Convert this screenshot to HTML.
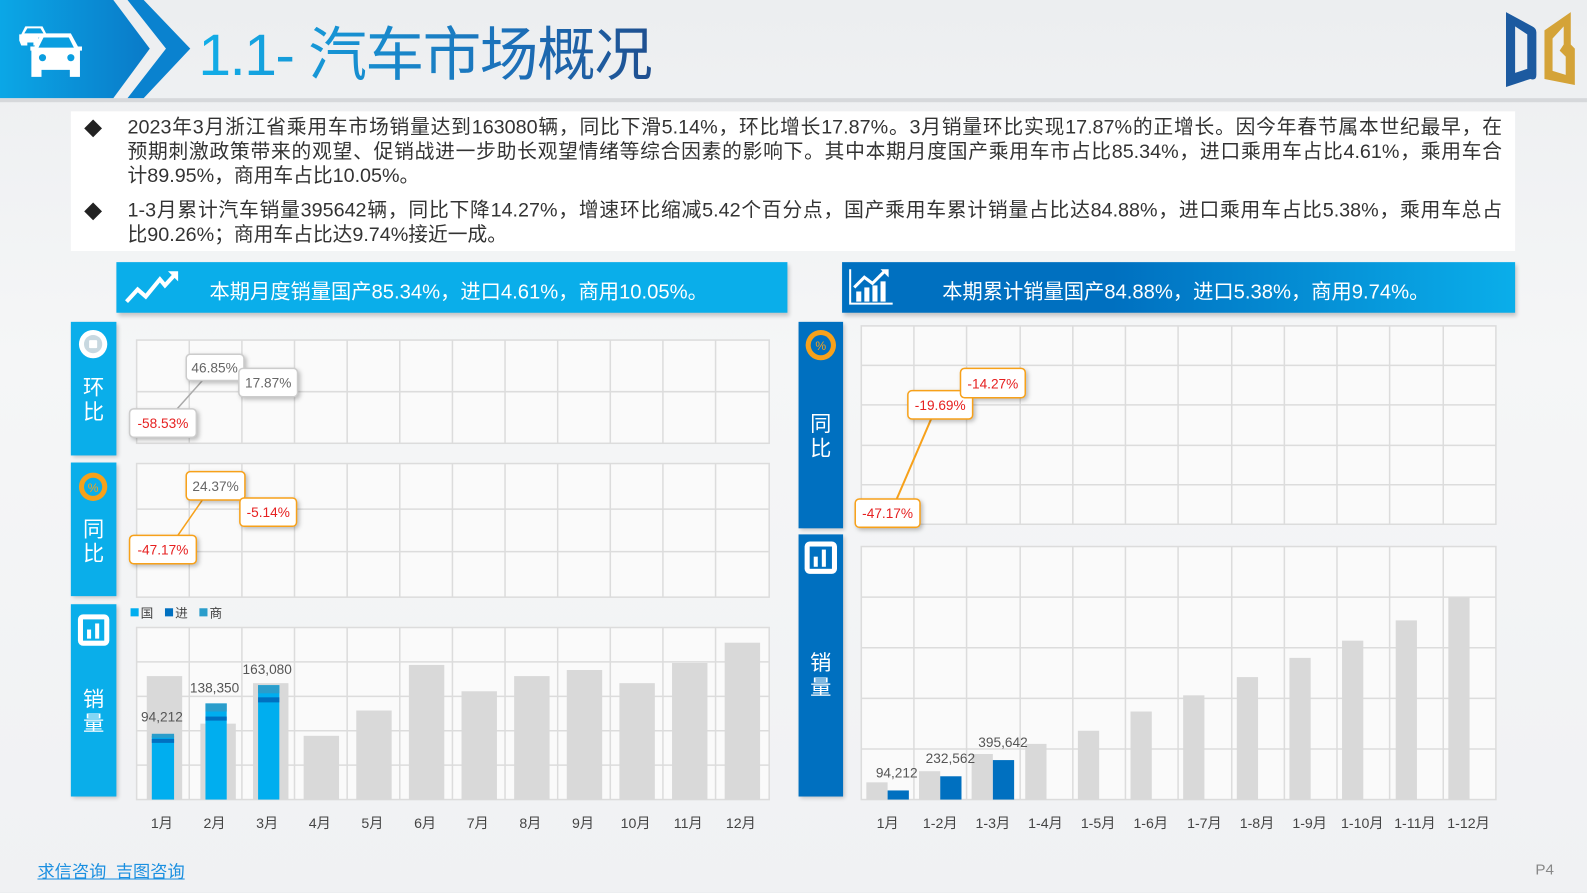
<!DOCTYPE html>
<html><head><meta charset="utf-8"><style>
*{margin:0;padding:0;box-sizing:border-box}
body{width:1587px;height:892px;overflow:hidden;position:relative;background:linear-gradient(180deg,#eceef0 0%,#f5f6f7 40%,#f0f1f3 100%);font-family:"Liberation Sans","Noto Sans CJK SC",sans-serif}
#w{position:absolute;left:0;top:0;width:1568px;height:882px;transform:scale(1.0121);transform-origin:0 0}
.abs{position:absolute}
.ln{position:absolute;left:126px;width:1358px;font-size:19.5px;line-height:24px;color:#333;white-space:nowrap;text-align:justify;text-align-last:justify}
.ln.l{text-align-last:left}
.side{position:absolute;color:#fff;font-size:21px;text-align:center;line-height:24px}
</style></head><body><div id="w">
<div class="abs" style="left:0;top:97px;width:1568px;height:4px;background:#d6d8db"></div>
<svg class="abs" style="left:0;top:0" width="200" height="98">
<defs><linearGradient id="hg" x1="0" y1="0" x2="1" y2="0"><stop offset="0" stop-color="#0ba7e6"/><stop offset="1" stop-color="#0a7ac8"/></linearGradient></defs>
<polygon points="0,0 112,0 148,48 112,97 0,97" fill="url(#hg)"/>
<polygon points="126,0 142,0 188,48 142,97 126,97 164,48" fill="#0a82cf"/>
<g fill="#fff">
<path d="M19,40 v-6 h2 l4,-8 h17 l4,8 h2 v3 h-5 l-5,0 v8 h-5 v-3 h-6 v3 h-6z"/>
<path d="M30,50 v-4 h4 l7,-13 h29 l7,13 h4 v4 h-2 v26 h-10 v-7 h-28 v7 h-10 v-26z"/>
</g>
<g fill="#0a9ee0"><path d="M24,33 l3,-5 h13 l3,5z"/><path d="M43,37 h25 l5,10 h-35z"/><circle cx="42" cy="57" r="3.5"/><circle cx="70" cy="57" r="3.5"/></g>
</svg>
<div class="abs" style="left:196px;top:15px;font-size:58px;line-height:80px;background:linear-gradient(90deg,#12aee8,#1c6fb8 70%,#1f4f8f);-webkit-background-clip:text;color:transparent;letter-spacing:-1.5px">1.1- 汽车市场概况</div>
<svg class="abs" style="left:1484px;top:8px" width="80" height="80">
<path d="M4,4 L30,18 Q34,20 34,24 V66 Q34,72 28,70 L4,78Z M13,18 V64 L25,60 V26Z" fill="#1c5aa0" fill-rule="evenodd"/>
<path d="M42,22 L68,4 V36 L72,40 V76 L42,70Z M50,30 V62 L63,66 V48 L57,42 L61,36 V18Z" fill="#d4a338" fill-rule="evenodd"/>
</svg>
<div class="abs" style="left:70px;top:110px;width:1427px;height:138px;background:#fff"></div>
<div class="abs" style="left:83px;top:114px;font-size:18px;color:#222">◆</div>
<div class="abs" style="left:83px;top:196px;font-size:18px;color:#222">◆</div>
<div class="ln" style="top:114px">2023年3月浙江省乘用车市场销量达到163080辆，同比下滑5.14%，环比增长17.87%。3月销量环比实现17.87%的正增长。因今年春节属本世纪最早，在</div>
<div class="ln" style="top:138px">预期刺激政策带来的观望、促销战进一步助长观望情绪等综合因素的影响下。其中本期月度国产乘用车市占比85.34%，进口乘用车占比4.61%，乘用车合</div>
<div class="ln l" style="top:162px">计89.95%，商用车占比10.05%。</div>
<div class="ln" style="top:196px">1-3月累计汽车销量395642辆，同比下降14.27%，增速环比缩减5.42个百分点，国产乘用车累计销量占比达84.88%，进口乘用车占比5.38%，乘用车总占</div>
<div class="ln l" style="top:220px">比90.26%；商用车占比达9.74%接近一成。</div>

<div class="abs" style="left:115px;top:259px;width:663px;height:50px;background:#0aaeea;box-shadow:2px 3px 4px rgba(0,0,0,.2)"></div>
<svg class="abs" style="left:122px;top:266px" width="56" height="36"><polyline points="3,32 14,20 22,27 36,10 41,16 52,4" fill="none" stroke="#fff" stroke-width="4"/><polygon points="44,2 54,2 54,12" fill="#fff"/></svg>
<div class="abs" style="left:207px;top:272px;font-size:20px;color:#fff">本期月度销量国产85.34%，进口4.61%，商用10.05%。</div>
<div class="abs" style="left:832px;top:259px;width:665px;height:50px;background:linear-gradient(90deg,#0070c0 40%,#0aaeea);box-shadow:2px 3px 4px rgba(0,0,0,.2)"></div>
<svg class="abs" style="left:838px;top:264px" width="46" height="40"><path d="M2,2 V36 H44" stroke="#fff" stroke-width="2" fill="none"/><g fill="#fff"><rect x="8" y="24" width="5" height="10"/><rect x="16" y="20" width="5" height="14"/><rect x="24" y="18" width="5" height="16"/><rect x="32" y="14" width="5" height="20"/></g><polyline points="6,20 16,10 24,16 36,4" stroke="#fff" stroke-width="3" fill="none"/><polygon points="32,2 40,2 40,10" fill="#fff"/></svg>
<div class="abs" style="left:931px;top:272px;font-size:20px;color:#fff">本期累计销量国产84.88%，进口5.38%，商用9.74%。</div>

<div class="abs" style="left:70px;top:318px;width:45px;height:132px;background:#0aaeea;box-shadow:2px 2px 4px rgba(0,0,0,.2)"></div>
<div class="abs" style="left:70px;top:457px;width:45px;height:132px;background:#0aaeea;box-shadow:2px 2px 4px rgba(0,0,0,.2)"></div>
<div class="abs" style="left:70px;top:597px;width:45px;height:190px;background:#0aaeea;box-shadow:2px 2px 4px rgba(0,0,0,.2)"></div>
<div class="abs" style="left:789px;top:318px;width:44px;height:204px;background:#0070c0;box-shadow:2px 2px 4px rgba(0,0,0,.2)"></div>
<div class="abs" style="left:789px;top:528px;width:44px;height:259px;background:#0070c0;box-shadow:2px 2px 4px rgba(0,0,0,.2)"></div>
<div class="side" style="left:70px;top:372px;width:45px">环<br>比</div>
<div class="side" style="left:70px;top:512px;width:45px">同<br>比</div>
<div class="side" style="left:70px;top:680px;width:45px">销<br>量</div>
<div class="side" style="left:789px;top:408px;width:44px">同<br>比</div>
<div class="side" style="left:789px;top:644px;width:44px">销<br>量</div>

<svg class="abs" style="left:0;top:0" width="1568" height="882" font-family="Liberation Sans,Noto Sans CJK SC,sans-serif">
<circle cx="92" cy="340" r="14" fill="#fff"/><circle cx="92" cy="340" r="9" fill="#c8d8e0"/><rect x="88" y="336" width="8" height="8" rx="1" fill="#fff"/>
<circle cx="92" cy="481" r="14" fill="#f7a11a"/><circle cx="92" cy="481" r="9" fill="#0aaeea"/><text x="92" y="486" font-size="12" fill="#f7a11a" text-anchor="middle">%</text>
<rect x="77" y="607" width="31" height="31" rx="5" fill="#fff"/><rect x="82" y="612" width="21" height="21" fill="#0aaeea"/><rect x="86" y="622" width="4" height="9" fill="#fff"/><rect x="94" y="616" width="4" height="15" fill="#fff"/>
<circle cx="811" cy="341" r="15" fill="#f7a11a"/><circle cx="811" cy="341" r="10" fill="#0070c0"/><text x="811" y="346" font-size="12" fill="#f7a11a" text-anchor="middle">%</text>
<rect x="795" y="535" width="32" height="32" rx="5" fill="#fff"/><rect x="800" y="540" width="22" height="22" fill="#0070c0"/><rect x="804" y="550" width="4" height="10" fill="#fff"/><rect x="812" y="543" width="4" height="17" fill="#fff"/>

<g stroke="#dcdcdc" stroke-width="1.5" fill="#fafafa">
<rect x="135" y="336" width="625" height="102"/>
<rect x="135" y="458" width="625" height="132"/>
<rect x="135" y="620" width="625" height="170"/>
<rect x="851" y="322" width="627" height="196"/>
<rect x="851" y="540" width="627" height="250"/>
</g>
<g stroke="#dcdcdc" stroke-width="1.5">
<path d="M135,387H760M135,503H760M135,545H760M135,654H760M135,688H760M135,722H760M135,756H760"/>
<path d="M187,336V438M239,336V438M291,336V438M343,336V438M395,336V438M447,336V438M499,336V438M551,336V438M603,336V438M655,336V438M707,336V438"/>
<path d="M187,458V590M239,458V590M291,458V590M343,458V590M395,458V590M447,458V590M499,458V590M551,458V590M603,458V590M655,458V590M707,458V590"/>
<path d="M187,620V790M239,620V790M291,620V790M343,620V790M395,620V790M447,620V790M499,620V790M551,620V790M603,620V790M655,620V790M707,620V790"/>
<path d="M851,361H1478M851,400H1478M851,440H1478M851,479H1478M851,590H1478M851,640H1478M851,690H1478M851,740H1478"/>
<path d="M903,322V518M955,322V518M1008,322V518M1060,322V518M1112,322V518M1164,322V518M1217,322V518M1269,322V518M1321,322V518M1373,322V518M1426,322V518"/>
<path d="M903,540V790M955,540V790M1008,540V790M1060,540V790M1112,540V790M1164,540V790M1217,540V790M1269,540V790M1321,540V790M1373,540V790M1426,540V790"/>
</g>
<g fill="#d9d9d9">
<rect x="145" y="668" width="35" height="122"/><rect x="198" y="715" width="35" height="75"/><rect x="250" y="675" width="35" height="115"/><rect x="300" y="727" width="35" height="63"/><rect x="352" y="702" width="35" height="88"/><rect x="404" y="657" width="35" height="133"/><rect x="456" y="683" width="35" height="107"/><rect x="508" y="668" width="35" height="122"/><rect x="560" y="662" width="35" height="128"/><rect x="612" y="675" width="35" height="115"/><rect x="664" y="655" width="35" height="135"/><rect x="716" y="635" width="35" height="155"/>
</g>
<g fill="#00aeef"><rect x="150" y="727" width="22" height="63"/><rect x="203" y="695" width="21" height="95"/><rect x="255" y="677" width="21" height="113"/></g>
<g fill="#2a9dcb"><rect x="150" y="725" width="22" height="4"/><rect x="203" y="695" width="21" height="8"/><rect x="255" y="677" width="21" height="8"/></g>
<g fill="#0070c0"><rect x="150" y="730" width="22" height="4"/><rect x="203" y="708" width="21" height="4"/><rect x="255" y="689" width="21" height="5"/></g>
<g font-size="13.5" fill="#555" text-anchor="middle"><text x="160" y="713">94,212</text><text x="212" y="684">138,350</text><text x="264" y="666">163,080</text></g>
<g font-size="14" fill="#444" text-anchor="middle">
<text x="160" y="818">1月</text><text x="212" y="818">2月</text><text x="264" y="818">3月</text><text x="316" y="818">4月</text><text x="368" y="818">5月</text><text x="420" y="818">6月</text><text x="472" y="818">7月</text><text x="524" y="818">8月</text><text x="576" y="818">9月</text><text x="628" y="818">10月</text><text x="680" y="818">11月</text><text x="732" y="818">12月</text>
</g>
<rect x="129" y="601" width="8" height="8" fill="#00aeef"/><text x="139" y="610" font-size="12.5" fill="#444">国</text>
<rect x="163" y="601" width="8" height="8" fill="#0070c0"/><text x="173" y="610" font-size="12.5" fill="#444">进</text>
<rect x="197" y="601" width="8" height="8" fill="#2a9dcb"/><text x="207" y="610" font-size="12.5" fill="#444">商</text>
<g fill="#d9d9d9">
<rect x="856" y="773" width="21" height="17"/><rect x="908" y="762" width="21" height="28"/><rect x="960" y="745" width="21" height="45"/><rect x="1013" y="735" width="21" height="55"/><rect x="1065" y="722" width="21" height="68"/><rect x="1117" y="703" width="21" height="87"/><rect x="1169" y="687" width="21" height="103"/><rect x="1222" y="669" width="21" height="121"/><rect x="1274" y="650" width="21" height="140"/><rect x="1326" y="633" width="21" height="157"/><rect x="1379" y="613" width="21" height="177"/><rect x="1431" y="590" width="21" height="200"/>
</g>
<g fill="#0070c0"><rect x="877" y="781" width="21" height="9"/><rect x="929" y="767" width="21" height="23"/><rect x="981" y="751" width="21" height="39"/></g>
<g font-size="13.5" fill="#555" text-anchor="middle"><text x="886" y="768">94,212</text><text x="939" y="754">232,562</text><text x="991" y="738">395,642</text></g>
<g font-size="14" fill="#444" text-anchor="middle">
<text x="877" y="818">1月</text><text x="929" y="818">1-2月</text><text x="981" y="818">1-3月</text><text x="1033" y="818">1-4月</text><text x="1085" y="818">1-5月</text><text x="1137" y="818">1-6月</text><text x="1190" y="818">1-7月</text><text x="1242" y="818">1-8月</text><text x="1294" y="818">1-9月</text><text x="1346" y="818">1-10月</text><text x="1398" y="818">1-11月</text><text x="1451" y="818">1-12月</text>
</g>
<line x1="175" y1="404" x2="200" y2="376" stroke="#aaa" stroke-width="1.5"/>
<line x1="175" y1="530" x2="200" y2="494" stroke="#f7a11a" stroke-width="1.5"/>
<line x1="886" y1="493" x2="920" y2="414" stroke="#f7a11a" stroke-width="2"/>
<g stroke-width="1.5" style="filter:drop-shadow(2px 2px 2px rgba(0,0,0,.25))">
<rect x="184" y="350" width="57" height="26" rx="4" fill="#fff" stroke="#ccc"/>
<rect x="236" y="364" width="58" height="28" rx="4" fill="#fff" stroke="#ccc"/>
<rect x="128" y="404" width="66" height="28" rx="4" fill="#fff" stroke="#ccc"/>
<rect x="184" y="466" width="58" height="28" rx="4" fill="#fff" stroke="#f7a11a"/>
<rect x="237" y="492" width="56" height="28" rx="4" fill="#fff" stroke="#f7a11a"/>
<rect x="128" y="529" width="66" height="28" rx="4" fill="#fff" stroke="#f7a11a"/>
<rect x="897" y="386" width="64" height="28" rx="4" fill="#fff" stroke="#f7a11a"/>
<rect x="949" y="364" width="64" height="29" rx="4" fill="#fff" stroke="#f7a11a"/>
<rect x="845" y="493" width="64" height="28" rx="4" fill="#fff" stroke="#f7a11a"/>
</g>
<g font-size="13.5" text-anchor="middle">
<text x="212" y="368" fill="#666">46.85%</text><text x="265" y="383" fill="#666">17.87%</text><text x="161" y="423" fill="#e62020">-58.53%</text>
<text x="213" y="485" fill="#666">24.37%</text><text x="265" y="511" fill="#e62020">-5.14%</text><text x="161" y="548" fill="#e62020">-47.17%</text>
<text x="929" y="405" fill="#e62020">-19.69%</text><text x="981" y="384" fill="#e62020">-14.27%</text><text x="877" y="512" fill="#e62020">-47.17%</text>
</g>
</svg>
<div class="abs" style="left:37px;top:847px;font-size:17px;color:#1a8fe0;text-decoration:underline">求信咨询&nbsp;&nbsp;吉图咨询</div>
<div class="abs" style="left:1517px;top:851px;font-size:15px;color:#888">P4</div>
</div></body></html>
